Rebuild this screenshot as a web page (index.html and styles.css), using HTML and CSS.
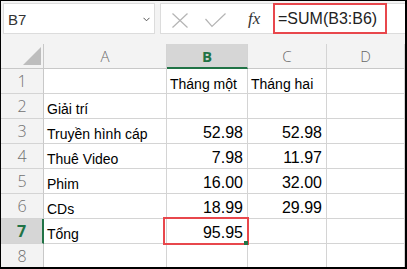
FILE: index.html
```html
<!DOCTYPE html>
<html lang="vi">

<head>
    <meta charset="UTF-8">
    <meta name="viewport" content="width=device-width, initial-scale=1.0">
    <title>Tổng - SUM</title>
    <link rel="stylesheet" href="styles.css">
</head>

<body>

    <div class="window">
        <div class="toolbar">
            <div class="namebox">
                <span class="cellref">B7</span>
                <svg class="chevron" width="7" height="5" viewBox="0 0 7 5">
                    <polyline points="0.5,0.8 3.5,3.8 6.5,0.8" fill="none" stroke="#555" stroke-width="1"/>
                </svg>
            </div>
            <div class="fxbar">
                <div class="fx-buttons">
                    <svg class="icon-x" width="16" height="15" viewBox="0 0 16 15">
                        <line x1="0.5" y1="0.5" x2="15.5" y2="14.5" stroke="#b4b4b4" stroke-width="1.2"/>
                        <line x1="15.5" y1="0.5" x2="0.5" y2="14.5" stroke="#b4b4b4" stroke-width="1.2"/>
                    </svg>
                    <svg class="icon-check" width="21" height="15" viewBox="0 0 21 15">
                        <polyline points="0.5,6 7,13.5 20.5,0.5" fill="none" stroke="#b4b4b4" stroke-width="1.2"/>
                    </svg>
                    <span class="fx">fx</span>
                </div>
                <div class="formula">=SUM(B3:B6)</div>
            </div>
        </div>

        <div class="sheet">
            <!-- column headers -->
            <div class="corner">
                <svg width="18" height="18" viewBox="0 0 18 18">
                    <polygon points="0,18 18,0 18,18" fill="#bdbdbd"/>
                </svg>
            </div>
            <div class="colhead">A</div>
            <div class="colhead sel">B</div>
            <div class="colhead">C</div>
            <div class="colhead">D</div>

            <div class="rowhead">1</div>
            <div class="cell"></div>
            <div class="cell">Tháng một</div>
            <div class="cell">Tháng hai</div>
            <div class="cell"></div>

            <div class="rowhead">2</div>
            <div class="cell">Giải trí</div>
            <div class="cell"></div>
            <div class="cell"></div>
            <div class="cell"></div>

            <div class="rowhead">3</div>
            <div class="cell">Truyền hình cáp</div>
            <div class="cell num">52.98</div>
            <div class="cell num">52.98</div>
            <div class="cell"></div>

            <div class="rowhead">4</div>
            <div class="cell">Thuê Video</div>
            <div class="cell num">7.98</div>
            <div class="cell num">11.97</div>
            <div class="cell"></div>

            <div class="rowhead">5</div>
            <div class="cell">Phim</div>
            <div class="cell num">16.00</div>
            <div class="cell num">32.00</div>
            <div class="cell"></div>

            <div class="rowhead">6</div>
            <div class="cell">CDs</div>
            <div class="cell num">18.99</div>
            <div class="cell num">29.99</div>
            <div class="cell"></div>

            <div class="rowhead sel">7</div>
            <div class="cell">Tổng</div>
            <div class="cell num active">95.95<span class="handle"></span></div>
            <div class="cell"></div>
            <div class="cell"></div>

            <div class="rowhead">8</div>
            <div class="cell"></div>
            <div class="cell"></div>
            <div class="cell"></div>
            <div class="cell"></div>
        </div>
    </div>

</body>

</html>
```

FILE: styles.css
```css
* {
    box-sizing: border-box;
}

body {
    margin: 0;
    padding: 0;
    background-color: #fff;
    font-family: "Liberation Sans", Arial, sans-serif;
}

.window {
    width: 407px;
    height: 269px;
    border-top: 1px solid #000;
    border-left: 1px solid #000;
    border-right: 2px solid #000;
    border-bottom: 2px solid #000;
    background-color: #f3f3f3;
    overflow: hidden;
}

/* name box + formula bar */
.toolbar {
    height: 43px;
    padding: 2px 0 0 2px;
    display: flex;
    gap: 5px;
    align-items: flex-start;
}

.namebox {
    width: 152px;
    height: 31px;
    background-color: #fff;
    border: 1px solid #dcdcdc;
    display: flex;
    align-items: center;
    justify-content: space-between;
    padding: 1px 4px 0 4px;
}

.cellref {
    font-size: 15px;
    color: #333;
}

.chevron {
    margin-top: 1px;
}

.fxbar {
    flex: 1;
    height: 31px;
    background-color: #fff;
    border: 1px solid #dcdcdc;
    border-right: none;
    display: flex;
}

.fx-buttons {
    width: 112px;
    display: flex;
    align-items: center;
    padding-top: 3px;
}

.icon-x {
    margin-left: 11px;
}

.icon-check {
    margin-left: 17px;
}

.fx {
    margin-left: 22px;
    font-family: "Liberation Serif", serif;
    font-style: italic;
    font-size: 17px;
    color: #333;
    margin-top: -3px;
}

.formula {
    width: 114px;
    height: 31px;
    margin-top: -1px;
    border: 2px solid #e8474c;
    padding: 0 0 0 3px;
    display: flex;
    align-items: center;
    font-size: 16px;
    color: #222;
    white-space: nowrap;
}

/* grid */
.sheet {
    display: grid;
    grid-template-columns: 43px 123px 81px 79px 1fr;
    grid-auto-rows: 25px;
}

.corner {
    background-color: #f3f3f3;
    border-right: 1px solid #c8c8c8;
    border-bottom: 1px solid #c8c8c8;
    display: flex;
    justify-content: flex-end;
    align-items: flex-end;
    padding: 0 2px 3px 0;
}

.colhead {
    background-color: #f3f3f3;
    border-right: 1px solid #d4d4d4;
    border-bottom: 1px solid #c8c8c8;
    display: flex;
    align-items: center;
    justify-content: center;
    font-family: "Open Sans", sans-serif;
    font-size: 15px;
    font-weight: 300;
    color: #666;
}

.rowhead {
    background-color: #f3f3f3;
    border-right: 1px solid #c8c8c8;
    border-bottom: 1px solid #d4d4d4;
    display: flex;
    align-items: center;
    justify-content: center;
    font-family: "Open Sans", sans-serif;
    font-size: 16px;
    font-weight: 300;
    color: #707070;
}

.colhead.sel {
    background-color: #d6d6d6;
    border-bottom: 2px solid #217346;
    color: #217346;
    font-weight: bold;
}

.rowhead.sel {
    background-color: #d6d6d6;
    border-right: 2px solid #217346;
    color: #217346;
    font-weight: bold;
}

.cell {
    background-color: #fff;
    border-right: 1px solid #d4d4d4;
    border-bottom: 1px solid #d4d4d4;
    display: flex;
    align-items: flex-end;
    padding: 0 3px 1px 3px;
    font-size: 14px;
    line-height: 16px;
    color: #000;
    white-space: nowrap;
}

.cell.num {
    justify-content: flex-end;
    font-size: 16px;
    line-height: 18px;
    padding-right: 4px;
}

.active {
    position: relative;
}

.active::after {
    content: "";
    position: absolute;
    top: -2px;
    left: -4px;
    right: -2px;
    bottom: -2px;
    border: 2px solid #e8474c;
}

.handle {
    position: absolute;
    right: -1px;
    bottom: -2px;
    width: 4px;
    height: 4px;
    background-color: #217346;
    z-index: 1;
}
```
